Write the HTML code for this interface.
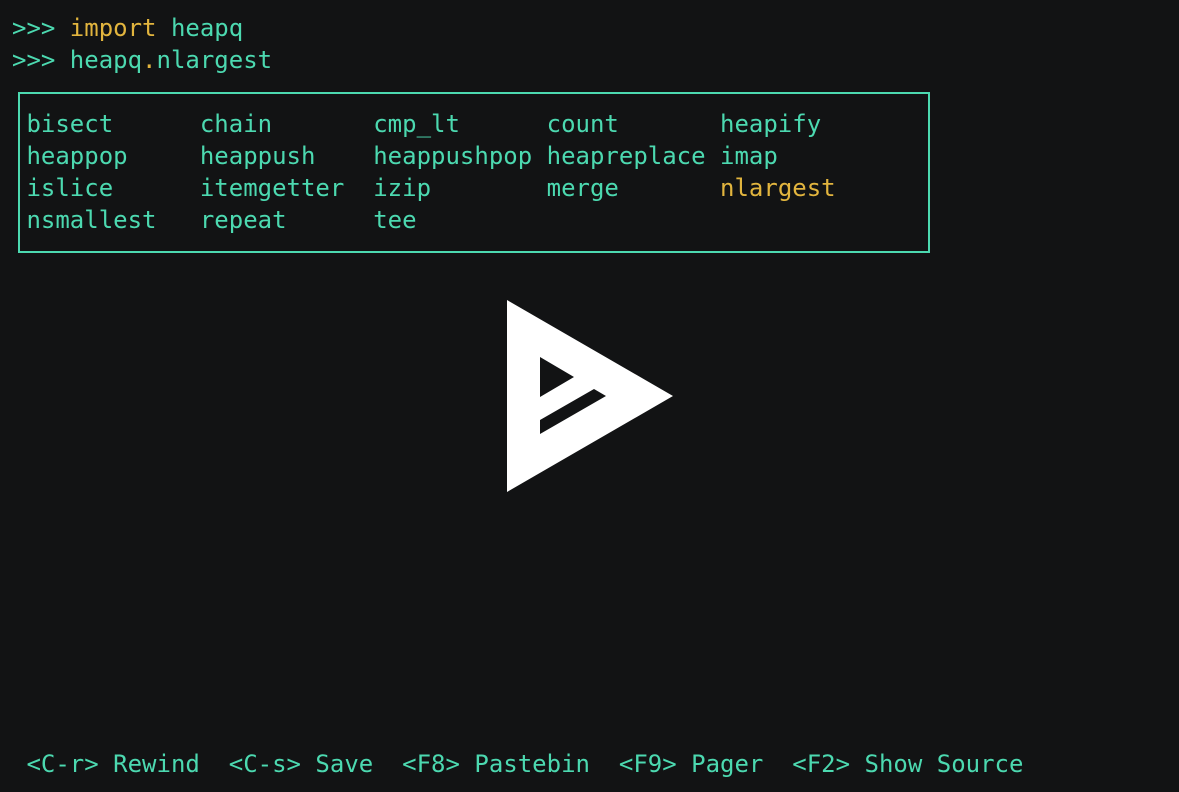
<!DOCTYPE html>
<html><head><meta charset="utf-8"><style>
html,body{margin:0;padding:0;background:#121314;width:1179px;height:792px;overflow:hidden}
pre{position:absolute;left:12px;top:12px;margin:0;font-family:"DejaVu Sans Mono","Liberation Mono",monospace;font-size:24px;line-height:32px;color:#4cd9b0;white-space:pre}
.y{color:#e2b53e}
.b{position:absolute;background:#4cd9b0}
</style></head><body>
<pre>&gt;&gt;&gt; <span class="y">import</span> heapq
&gt;&gt;&gt; heapq<span class="y">.</span>nlargest

 bisect      chain       cmp_lt      count       heapify
 heappop     heappush    heappushpop heapreplace imap
 islice      itemgetter  izip        merge       <span class="y">nlargest</span>
 nsmallest   repeat      tee
</pre>
<div class="b" style="left:18px;top:92px;width:912px;height:2px"></div>
<div class="b" style="left:18px;top:251px;width:912px;height:2px"></div>
<div class="b" style="left:18px;top:92px;width:2px;height:161px"></div>
<div class="b" style="left:928px;top:92px;width:2px;height:161px"></div>
<pre style="top:748px"> &lt;C-r&gt; Rewind  &lt;C-s&gt; Save  &lt;F8&gt; Pastebin  &lt;F9&gt; Pager  &lt;F2&gt; Show Source</pre>
<svg style="position:absolute;left:0;top:0" width="1179" height="792">
<path fill="#fff" fill-rule="evenodd" d="M507 300 L673 396 L507 492 Z M540 357 L574 377 L540 397 Z M540 420 L594 389 L606 396 L540 434 Z"/>
</svg>
</body></html>
